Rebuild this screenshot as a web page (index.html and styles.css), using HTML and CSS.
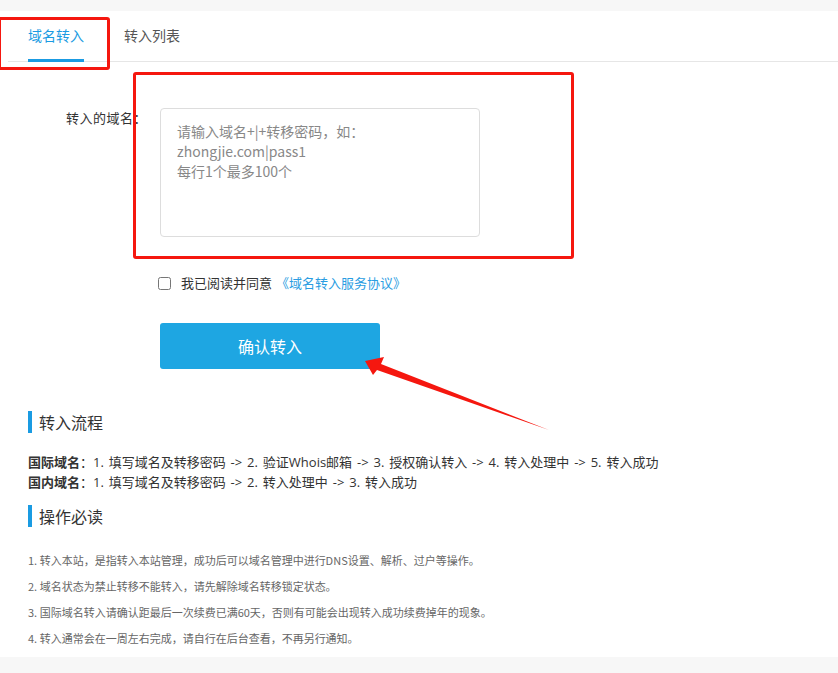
FILE: index.html
```html
<!DOCTYPE html>
<html>
<head>
	<meta charset="utf-8">
	<meta name="viewport" content="width=device-width, initial-scale=1">
	<title>域名转入</title>
	<link rel="stylesheet" href="styles.css">
</head>
<body>
	<div class="panel">
		<div class="tabs">
			<a class="tab active">域名转入</a>
			<a class="tab">转入列表</a>
		</div>

		<div class="form-row">
			<label class="form-label" for="domains">转入的域名：</label>
			<textarea id="domains" placeholder="请输入域名+|+转移密码，如：&#10;zhongjie.com|pass1&#10;每行1个最多100个"></textarea>
		</div>
		<div class="agree-row">
			<input type="checkbox" id="agree">
			<label for="agree">我已阅读并同意</label>
			<a class="link">《域名转入服务协议》</a>
		</div>
		<div class="btn-row">
			<button class="btn-submit">确认转入</button>
		</div>

		<h3 class="section-title">转入流程</h3>
		<div class="flow">
			<p><b>国际域名</b>：1. 填写域名及转移密码 -&gt; 2. 验证Whois邮箱 -&gt; 3. 授权确认转入 -&gt; 4. 转入处理中 -&gt; 5. 转入成功</p>
			<p><b>国内域名</b>：1. 填写域名及转移密码 -&gt; 2. 转入处理中 -&gt; 3. 转入成功</p>
		</div>

		<h3 class="section-title">操作必读</h3>
		<ul class="notes">
			<li>1. 转入本站，是指转入本站管理，成功后可以域名管理中进行DNS设置、解析、过户等操作。</li>
			<li>2. 域名状态为禁止转移不能转入，请先解除域名转移锁定状态。</li>
			<li>3. 国际域名转入请确认距最后一次续费已满60天，否则有可能会出现转入成功续费掉年的现象。</li>
			<li>4. 转入通常会在一周左右完成，请自行在后台查看，不再另行通知。</li>
		</ul>
	</div>

	<!-- red annotation marks drawn over the page -->
	<div class="mark mark-tab"></div>
	<div class="mark mark-input"></div>
	<svg class="arrow" width="838" height="673" viewBox="0 0 838 673">
		<polygon points="365,361 384,357 381,364 549,430 377,370 373,375" fill="#f5170f"/>
	</svg>
</body>
</html>
```

FILE: styles.css
```css
body {
	margin: 0;
	padding: 0;
	background-color: #f7f7f7;
	font-family: "Noto Sans CJK SC", "Liberation Sans", sans-serif;
	color: #333;
}
.panel {
	margin-top: 11px;
	background: #fff;
	padding-bottom: 6px;
}
.tabs {
	display: flex;
	margin-left: 8px;
	border-bottom: 1px solid #e6e6e6;
}
.tab {
	margin: 0 20px -1px;
	line-height: 48px;
	font-size: 14px;
	color: #555;
	border-bottom: 3px solid transparent;
	cursor: pointer;
}
.tab.active {
	color: #1a9be2;
	border-bottom-color: #1a9be2;
}
.form-row {
	display: flex;
	align-items: flex-start;
	margin-top: 46px;
}
.form-label {
	width: 147px;
	text-align: right;
	font-size: 13px;
	line-height: 20px;
	letter-spacing: 0.5px;
	color: #333;
}
.form-row textarea {
	margin-left: 13px;
	width: 320px;
	height: 129px;
	box-sizing: border-box;
	border: 1px solid #ddd;
	border-radius: 4px;
	padding: 12px 16px;
	font-family: inherit;
	font-size: 14px;
	line-height: 20px;
	resize: none;
	outline: none;
}
.form-row textarea::placeholder {
	color: #888;
}
.agree-row {
	display: flex;
	align-items: center;
	margin-top: 36px;
	padding-left: 158px;
	font-size: 13px;
	line-height: 20px;
}
.agree-row input {
	margin: 0 10px 0 0;
	width: 13px;
	height: 13px;
}
.agree-row .link {
	margin-left: 4px;
	color: #2a9de2;
	cursor: pointer;
}
.btn-row {
	margin-top: 30px;
	padding-left: 160px;
}
.btn-submit {
	width: 220px;
	height: 46px;
	background-color: #1ea6e2;
	color: #fff;
	border: none;
	border-radius: 3px;
	font-family: inherit;
	font-size: 16px;
	cursor: pointer;
}
.section-title {
	margin: 42px 0 0 28px;
	padding: 2px 0 2px 7px;
	border-left: 4px solid #1a9be2;
	font-size: 16px;
	font-weight: normal;
	line-height: 18px;
	height: 18px;
}
.flow {
	margin: 19px 0 0 28px;
	font-family: "Open Sans", "Noto Sans CJK SC", sans-serif;
	font-size: 13px;
	line-height: 20px;
	word-spacing: 1.5px;
}
.flow p {
	margin: 0;
}
.flow + .section-title {
	margin-top: 13px;
}
.notes {
	list-style: none;
	margin: 20px 0 0 28px;
	padding: 0;
	font-size: 11px;
	line-height: 26px;
	color: #666;
}
.mark {
	position: absolute;
	border: 3px solid #f5170f;
	border-radius: 3px;
}
.mark-tab {
	left: -2px;
	top: 17px;
	width: 106px;
	height: 47px;
}
.mark-input {
	left: 133px;
	top: 72px;
	width: 435px;
	height: 181px;
}
.arrow {
	position: absolute;
	left: 0;
	top: 0;
	pointer-events: none;
}
```
